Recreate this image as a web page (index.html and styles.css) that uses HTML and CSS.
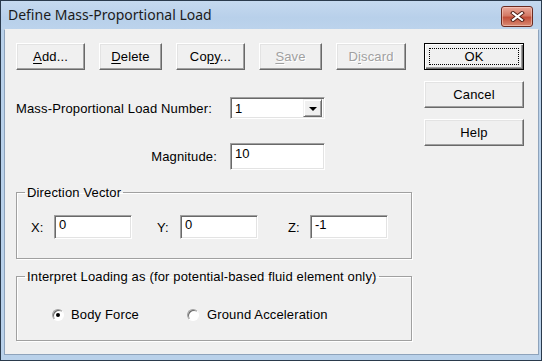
FILE: index.html
```html
<!DOCTYPE html>
<html lang="en">

<head>
    <meta charset="UTF-8">
    <title>Define Mass-Proportional Load</title>
    <link rel="stylesheet" href="styles.css">
</head>

<body>
    <div class="window">
        <!-- Title Bar -->
        <div class="titlebar">
            <span class="title">Define Mass-Proportional Load</span>
            <button class="close" aria-label="Close">
                <svg width="15" height="11" viewBox="0 0 15 11">
                    <path d="M3 2 L12 9 M12 2 L3 9" stroke="#4a1a12" stroke-width="4" stroke-linecap="square" fill="none"/>
                    <path d="M3 2 L12 9 M12 2 L3 9" stroke="#fff" stroke-width="2.2" stroke-linecap="square" fill="none"/>
                </svg>
            </button>
        </div>

        <div class="client">
            <div class="main">
                <!-- Load Actions -->
                <div class="toolbar">
                    <button class="btn w69"><u>A</u>dd...</button>
                    <button class="btn w63"><u>D</u>elete</button>
                    <button class="btn w69">Co<u>p</u>y...</button>
                    <button class="btn w63" disabled><u>S</u>ave</button>
                    <button class="btn w70" disabled>D<u>i</u>scard</button>
                </div>

                <div class="field-row load-row">
                    <label class="field-label">Mass-Proportional Load Number:</label>
                    <div class="combo">
                        <span class="combo-value">1</span>
                        <span class="combo-arrow"></span>
                    </div>
                </div>

                <div class="field-row magnitude-row">
                    <label class="field-label right">Magnitude:</label>
                    <input class="text-input magnitude" type="text" value="10">
                </div>

                <!-- Direction Vector -->
                <fieldset class="group direction">
                    <legend>Direction Vector</legend>
                    <div class="coords">
                        <div class="coord"><label>X:</label><input class="text-input coord-input" type="text" value="0"></div>
                        <div class="coord"><label>Y:</label><input class="text-input coord-input" type="text" value="0"></div>
                        <div class="coord"><label class="z">Z:</label><input class="text-input coord-input" type="text" value="-1"></div>
                    </div>
                </fieldset>

                <!-- Interpretation -->
                <fieldset class="group interpret">
                    <legend>Interpret Loading as (for potential-based fluid element only)</legend>
                    <div class="radios">
                        <div class="radio-item"><span class="radio checked"></span>Body Force</div>
                        <div class="radio-item"><span class="radio"></span>Ground Acceleration</div>
                    </div>
                </fieldset>
            </div>

            <div class="side">
                <button class="btn default"><span class="focus">OK</span></button>
                <button class="btn">Cancel</button>
                <button class="btn">Help</button>
            </div>
        </div>
    </div>
</body>

</html>
```

FILE: styles.css
```css
/* General */
body {
    margin: 0;
    padding: 0;
    font-family: 'Liberation Sans', Arial, sans-serif;
    font-size: 13px;
    letter-spacing: 0.15px;
    color: #000;
    background: #fff;
}

/* Window Frame */
.window {
    width: 542px;
    height: 361px;
    box-sizing: border-box;
    border: 1px solid #2a3a4c;
    background: #b9d1ea;
    padding: 0 2px 5px 3px;
    display: flex;
    flex-direction: column;
}

.titlebar {
    height: 28px;
    flex-shrink: 0;
    display: flex;
    align-items: center;
    justify-content: space-between;
    background: linear-gradient(180deg, #c5d9ef 0%, #b8d0ea 60%, #bcd3ec 100%);
    margin: 0 -2px 0 -3px;
    padding: 0 8px 0 7px;
}

.title {
    font-family: 'Noto Sans', 'Liberation Sans', sans-serif;
    font-size: 14px;
    letter-spacing: 0;
    color: #1b1b1b;
    margin-top: -1px;
}

.close {
    width: 32px;
    height: 21px;
    margin-top: 2px;
    padding: 0;
    border: 1px solid #6b2a20;
    border-radius: 3px;
    background: linear-gradient(180deg, #e9a99b 0%, #d47a66 45%, #c24f3a 55%, #d98a74 100%);
    box-shadow: inset 0 0 0 1px rgba(255, 220, 210, 0.5);
    display: flex;
    align-items: center;
    justify-content: center;
}

/* Client Area */
.client {
    flex: 1;
    display: flex;
    background: #f0f0f0;
    border: 1px solid #8ea3bb;
    border-top-color: #f0f0f0;
    padding: 13px 11px 0 11px;
    gap: 12px;
}

.main {
    width: 396px;
}

.side {
    width: 100px;
    display: flex;
    flex-direction: column;
    gap: 11px;
}

/* Classic Buttons */
.btn {
    height: 27px;
    padding: 0;
    font-family: 'Liberation Sans', Arial, sans-serif;
    font-size: 13px;
    letter-spacing: 0.15px;
    color: #000;
    background: #f0f0f0;
    border: 1px solid;
    border-color: #fff #696969 #696969 #fff;
    box-shadow: inset -1px -1px 0 #a0a0a0, inset 1px 1px 0 #e3e3e3;
}

.btn:disabled {
    color: #a0a0a0;
    text-shadow: 1px 1px 0 #fff;
}

.btn u {
    text-underline-offset: 2px;
}

.w63 { width: 63px; }
.w69 { width: 69px; }
.w70 { width: 70px; }

.toolbar {
    display: flex;
    gap: 14px;
}

.side .btn {
    width: 100px;
}

.btn.default {
    border: 1px solid #000;
    box-shadow: inset 1px 1px 0 #fff, inset -1px -1px 0 #696969, inset -2px -2px 0 #a0a0a0;
    display: flex;
    padding: 4px;
}

.focus {
    flex: 1;
    border: 1px dotted #000;
    display: flex;
    align-items: center;
    justify-content: center;
}

/* Fields */
.field-row {
    display: flex;
    align-items: center;
}

.field-label {
    width: 214px;
}

.field-label.right {
    text-align: right;
    padding-right: 13px;
    box-sizing: border-box;
}

.load-row {
    margin-top: 27px;
}

.magnitude-row {
    margin-top: 24px;
}

.text-input {
    box-sizing: border-box;
    margin: 0;
    font-family: 'Liberation Sans', Arial, sans-serif;
    font-size: 13px;
    color: #000;
    background: #fff;
    border: 1px solid;
    border-color: #a0a0a0 #fff #fff #a0a0a0;
    box-shadow: inset 1px 1px 0 #696969, inset -1px -1px 0 #e3e3e3;
    outline: none;
}

.magnitude {
    width: 95px;
    height: 27px;
    padding: 1px 3px 8px 4px;
}

.combo {
    width: 95px;
    height: 22px;
    box-sizing: border-box;
    display: flex;
    align-items: center;
    justify-content: space-between;
    background: #fff;
    border: 1px solid;
    border-color: #a0a0a0 #fff #fff #a0a0a0;
    box-shadow: inset 1px 1px 0 #696969, inset -1px -1px 0 #e3e3e3;
    padding: 2px 2px 2px 4px;
}

.combo-arrow {
    width: 19px;
    height: 18px;
    box-sizing: border-box;
    background: #f0f0f0;
    border: 1px solid;
    border-color: #f0f0f0 #696969 #696969 #f0f0f0;
    box-shadow: inset 1px 1px 0 #fff, inset -1px -1px 0 #a0a0a0;
    display: flex;
    align-items: center;
    justify-content: center;
}

.combo-arrow::after {
    content: '';
    border-left: 4px solid transparent;
    border-right: 4px solid transparent;
    border-top: 4px solid #000;
    margin-top: 1px;
}

/* Group Boxes */
.group {
    margin: 0;
    padding: 0;
    min-width: 0;
    border: 1px solid #a0a0a0;
    box-shadow: 1px 1px 0 #fff, inset 1px 1px 0 #fff;
}

.group legend {
    margin-left: 8px;
    padding: 0 2px;
    line-height: 15px;
}

.direction {
    margin-top: 15px;
    height: 72px;
}

.coords {
    display: grid;
    grid-template-columns: 126px 131px 100px;
    padding: 15px 0 0 14px;
}

.coord {
    display: flex;
    align-items: center;
}

.coord label {
    width: 23px;
}

.coord label.z {
    width: 22px;
}

.coord-input {
    width: 78px;
    height: 24px;
    padding: 1px 3px 6px 4px;
}

.interpret {
    margin-top: 10px;
    height: 70px;
}

.radios {
    display: grid;
    grid-template-columns: 135px auto;
    padding: 23px 0 0 35px;
    line-height: 15px;
}

.radio-item {
    display: flex;
    align-items: center;
}

.radio {
    width: 12px;
    height: 12px;
    box-sizing: border-box;
    border-radius: 50%;
    background: #fff;
    border: 1px solid;
    border-color: #a0a0a0 #fff #fff #a0a0a0;
    box-shadow: inset 1px 1px 0 #696969;
    margin-right: 7px;
    display: flex;
    align-items: center;
    justify-content: center;
}

.radio-item + .radio-item .radio {
    margin-right: 8px;
}

.radio.checked::after {
    content: '';
    width: 4px;
    height: 4px;
    border-radius: 50%;
    background: #000;
}
```
